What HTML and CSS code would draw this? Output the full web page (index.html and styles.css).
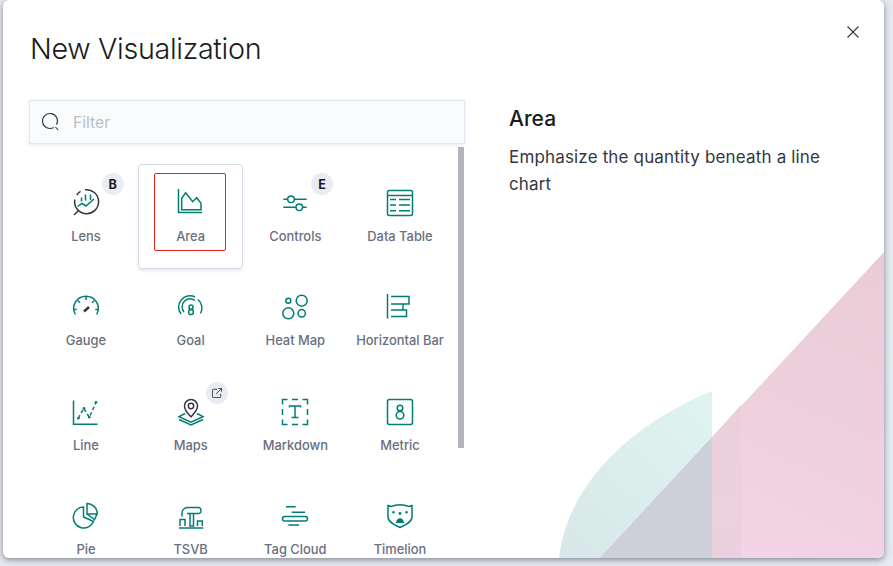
FILE: index.html
```html
<!DOCTYPE html>
<html lang="en">
<head>
  <meta charset="UTF-8">
  <title>New Visualization</title>
  <link rel="stylesheet" href="styles.css">
</head>
<body>

  <div class="modal">
    <svg class="modal-art" viewBox="0 0 881 558" aria-hidden="true">
      <defs>
        <linearGradient id="pink-fade" gradientUnits="userSpaceOnUse" x1="881" y1="252" x2="738" y2="558">
          <stop offset="0" stop-color="#e9ccd6"/>
          <stop offset="1" stop-color="#f3d4e3"/>
        </linearGradient>
        <linearGradient id="pink-band" gradientUnits="userSpaceOnUse" x1="738" y1="405" x2="709" y2="558">
          <stop offset="0" stop-color="#eccfdb"/>
          <stop offset="1" stop-color="#ebd1df"/>
        </linearGradient>
        <linearGradient id="teal-fade" gradientUnits="userSpaceOnUse" x1="709" y1="391" x2="556" y2="558">
          <stop offset="0" stop-color="#dff4f1"/>
          <stop offset="1" stop-color="#d8e7e7"/>
        </linearGradient>
      </defs>
      <path d="M556 558C564 488 622 427 709 391V558Z" fill="url(#teal-fade)"/>
      <path d="M881 252V558H597Z" fill="url(#pink-fade)"/>
      <path d="M597 558L709 437V558Z" fill="#cdcfd9"/>
      <path d="M709 558V437L738 405V558Z" fill="url(#pink-band)"/>
    </svg>

    <svg class="modal-close" viewBox="0 0 12 12" aria-hidden="true">
      <path d="M.5.5l11 11M11.5.5l-11 11"/>
    </svg>

    <div class="picker">
      <h1>New Visualization</h1>

      <div class="filter">
        <svg viewBox="0 0 20 20" aria-hidden="true">
          <path d="M12.750 15.500A7.500 7.500 0 1 1 15.500 12.750"/>
          <path d="M14.500 15l2.500 3"/>
        </svg>
        <span>Filter</span>
      </div>

      <div class="scroll-thumb"></div>

      <div class="types">
        <div class="type">
          <svg class="icon" viewBox="0 0 32 32">
            <path class="dark" d="M15 2.800A12 12 0 1 1 4.800 12.500M6.700 8A12 12 0 0 1 10.500 4.400M4 28l4-4"/>
            <path d="M11.500 10.500v4M15.500 7.500v6M20.500 7.500v5.500M7.500 19.500l4.500-3 4 2.500 8-7"/>
          </svg>
          <span class="label">Lens</span>
          <span class="badge">B</span>
        </div>
        <div class="type selected">
          <svg class="icon" viewBox="0 0 32 32">
            <path d="M3.500 2v23.500H27M6.700 22.800V11.300l4-5.600 7 9 4-4 4.300 5.600v6.500Z"/>
          </svg>
          <span class="label">Area</span>
        </div>
        <div class="type">
          <svg class="icon" viewBox="0 0 32 32">
            <path d="M4.300 12.300h4.400M15.300 12.300h12.400M4.300 20.300h12.700M23.600 20.300h4.100"/>
            <circle cx="12" cy="12.300" r="3.300"/>
            <circle cx="20.300" cy="20.300" r="3.300"/>
          </svg>
          <span class="label">Controls</span>
          <span class="badge">E</span>
        </div>
        <div class="type">
          <svg class="icon" viewBox="0 0 32 32">
            <rect x="3.500" y="3.500" width="25" height="25" rx="2"/>
            <path d="M3.500 8.500h25M6 12.500h6M15 12.500h11M6 18h6M15 18h11M6 23.700h6M15 23.700h11"/>
          </svg>
          <span class="label">Data Table</span>
        </div>

        <div class="type">
          <svg class="icon" viewBox="0 0 32 32">
            <path d="M5.300 23.500A12.300 12.300 0 1 1 26.700 23.500M16 6v3M8 9.800l2 2M24 9.800l-2 2M3.700 18.500h3M25.300 18.500h3"/>
            <path class="thick" d="M14 20.500l5-4.500"/>
          </svg>
          <span class="label">Gauge</span>
        </div>
        <div class="type">
          <svg class="icon" viewBox="0 0 32 32">
            <path d="M6 23A11.300 11.300 0 0 1 20 6M23 8.500A11.300 11.300 0 0 1 25.500 22.500"/>
            <path d="M9 21A8 8 0 0 1 20 9.500"/>
            <ellipse cx="16" cy="16.200" rx="2" ry="2.200"/>
            <ellipse cx="16" cy="21" rx="2.400" ry="2.600"/>
          </svg>
          <span class="label">Goal</span>
        </div>
        <div class="type">
          <svg class="icon" viewBox="0 0 32 32">
            <circle cx="9.300" cy="9.700" r="2.500"/>
            <circle cx="22.700" cy="9.700" r="5.500"/>
            <circle cx="9.300" cy="22.300" r="5.500"/>
            <circle cx="22.700" cy="22.300" r="3.700"/>
          </svg>
          <span class="label">Heat Map</span>
        </div>
        <div class="type">
          <svg class="icon" viewBox="0 0 32 32">
            <path d="M3.500 3v24.500M7 5.500h18v7.500H7M7 13h12v6H7M19 19h3.500v6.500H7"/>
          </svg>
          <span class="label">Horizontal Bar</span>
        </div>

        <div class="type">
          <svg class="icon" viewBox="0 0 32 32">
            <path d="M3.500 4.500v23.800h24"/>
            <path class="dots" d="M8.300 22.300l5.500-10 5.500 9 6.700-15"/>
            <circle class="dot" cx="26" cy="6.300" r="1.300"/>
            <circle class="dot" cx="19.300" cy="21.300" r="1.300"/>
            <circle class="dot" cx="8.300" cy="22.300" r="1.300"/>
            <circle class="dot" cx="14" cy="12.300" r="1.300"/>
          </svg>
          <span class="label">Line</span>
        </div>
        <div class="type">
          <svg class="icon" viewBox="0 0 32 32">
            <path class="dark" d="M16 20.800C13 17.500 9.500 14.500 9.500 10a6.500 6.500 0 0 1 13 0C22.500 14.500 19 17.500 16 20.800Z"/>
            <circle class="dark" cx="16" cy="10" r="2.700"/>
            <path d="M10 17.500l-6 3.200 12 5.500 12-5.500-6-3.200M4 23.500l12 5.500 12-5.500"/>
          </svg>
          <span class="label">Maps</span>
          <span class="badge">
            <svg class="badge-icon" viewBox="0 0 12 12">
              <path d="M6 1.500H1.500a1 1 0 0 0-1 1v8a1 1 0 0 0 1 1h8a1 1 0 0 0 1-1V7M5 7l6.500-6.500M7.500.5h4v4"/>
            </svg>
          </span>
        </div>
        <div class="type">
          <svg class="icon" viewBox="0 0 32 32">
            <path d="M8.500 3.500h-5v5M13 3.500h6M23.500 3.500h5v5M3.500 13v6M28.500 13v6M3.500 23.500v5h5M13 28.500h6M23.500 28.500h5v-5"/>
            <path d="M10.500 11.500V10h11v1.500M16 10v11.500M12.500 21.500h7"/>
          </svg>
          <span class="label">Markdown</span>
        </div>
        <div class="type">
          <svg class="icon" viewBox="0 0 32 32">
            <rect x="3.500" y="3.500" width="25" height="25" rx="2"/>
            <circle cx="16" cy="12" r="2.800"/>
            <circle cx="16" cy="19.300" r="3.800"/>
          </svg>
          <span class="label">Metric</span>
        </div>

        <div class="type">
          <svg class="icon" viewBox="0 0 32 32">
            <path d="M17 3.500A10.500 10.500 0 0 1 27.300 14H17Z"/>
            <path d="M13.500 7A10.500 10.500 0 1 0 23.500 21.500L13.500 17Z"/>
            <path d="M17 14l7.500 5.500 2.500-5.500"/>
          </svg>
          <span class="label">Pie</span>
        </div>
        <div class="type">
          <svg class="icon" viewBox="0 0 32 32">
            <path d="M4 28h24.300M5 26v-6.500h5V26M15 13.500V26h3.500V13.500M22.500 26v-5h4.800v5"/>
            <path d="M7 16.500v-3a6 6 0 0 1 5-6h11.500a2.500 2.500 0 0 1 2.500 2.500v1a2.500 2.500 0 0 1-2.500 2.500H12"/>
          </svg>
          <span class="label">TSVB</span>
        </div>
        <div class="type">
          <svg class="icon" viewBox="0 0 32 32">
            <path d="M7 6.700h9.700M12.700 12.300H26M9.300 25H20"/>
            <rect x="3.500" y="16.500" width="25" height="4.500" rx="2.250"/>
          </svg>
          <span class="label">Tag Cloud</span>
        </div>
        <div class="type">
          <svg class="icon" viewBox="0 0 32 32">
            <path d="M4 5.500l3 1c5.500-2 12.500-2 18 0l3-1V17c0 5.500-7 8-12 10.500C11 25 4 22.500 4 17Z"/>
            <circle class="dot" cx="9.500" cy="12.300" r="1.200"/>
            <circle class="dot" cx="22.500" cy="12.300" r="1.200"/>
            <circle class="dot" cx="16" cy="13.500" r="1.400"/>
            <path class="dot" d="M12 23c0-6.500 8-6.500 8 0Z"/>
          </svg>
          <span class="label">Timelion</span>
        </div>
      </div>
    </div>

    <div class="details">
      <h2>Area</h2>
      <p>Emphasize the quantity beneath a line chart</p>
    </div>
  </div>

</body>
</html>
```

FILE: styles.css
```css
body {
  font-family: Inter, "Noto Sans", sans-serif;
  margin: 0;
  padding: 0 9px 8px 3px;
  height: 100vh;
  box-sizing: border-box;
  background: #e9ebf0;
  overflow: hidden;
}

.modal {
  position: relative;
  display: flex;
  height: 100%;
  background: #ffffff;
  border-radius: 6px;
  box-shadow: 0 2px 5px rgba(60, 66, 90, 0.45), 0 1px 12px rgba(60, 66, 90, 0.2);
  overflow: hidden;
}

.modal-art {
  position: absolute;
  left: 0;
  top: 0;
  width: 100%;
  height: 100%;
}

.modal-close {
  position: absolute;
  right: 25px;
  top: 26px;
  width: 12px;
  height: 12px;
  fill: none;
  stroke: #343741;
  stroke-width: 1.1;
}

.picker {
  position: relative;
  width: 462px;
  flex: none;
}

h1 {
  margin: 0;
  padding: 30px 0 0 27px;
  height: 100px;
  box-sizing: border-box;
  font-size: 28.7px;
  line-height: 38px;
  font-weight: 300;
  letter-spacing: -0.32px;
  color: #1a1c21;
}

.filter {
  display: flex;
  align-items: center;
  gap: 12px;
  margin-left: 26px;
  height: 44px;
  box-sizing: border-box;
  padding-left: 11px;
  background: #fafbfd;
  border: 1px solid #e2e6f0;
  box-shadow: 0 1px 3px rgba(100, 110, 140, 0.12);
  color: #bbbfc8;
  font-size: 15.7px;
}

.filter svg {
  width: 20px;
  height: 20px;
  fill: none;
  stroke: #343741;
  stroke-width: 1.1;
}

.scroll-thumb {
  position: absolute;
  left: 455px;
  top: 147px;
  width: 6px;
  height: 301px;
  background: #b4b6bc;
}

.types {
  display: grid;
  grid-template-columns: repeat(4, 104.7px);
  grid-auto-rows: 104.5px;
  margin: 20px 0 0 30.6px;
}

.type {
  position: relative;
  display: flex;
  flex-direction: column;
  align-items: center;
  padding-top: 22.8px;
  box-sizing: border-box;
}

.type.selected {
  border: 1px solid #d3dae6;
  border-radius: 4px;
  padding-top: 22px;
  box-shadow: 0 2px 3px rgba(100, 110, 140, 0.15);
}

.type.selected::after {
  content: "";
  position: absolute;
  left: 15px;
  top: 8px;
  width: 70px;
  height: 76px;
  border: 1px solid #e8231c;
  border-radius: 2px;
}

.icon {
  width: 32px;
  height: 32px;
  fill: none;
  stroke: #017d73;
  stroke-width: 1.5;
}

.icon .dark {
  stroke: #343741;
}

.icon .thick {
  stroke-width: 2.5;
  stroke: #343741;
}

.icon .dots {
  stroke-dasharray: 3.5 2.5;
}

.icon .dot {
  fill: #017d73;
  stroke: none;
}

.label {
  margin-top: 10px;
  font-size: 12.9px;
  line-height: 16px;
  font-weight: 500;
  color: #6a7080;
  white-space: nowrap;
}

.badge {
  position: absolute;
  left: 68px;
  top: 9px;
  width: 22px;
  height: 22px;
  border-radius: 50%;
  background: #e9edf3;
  display: flex;
  align-items: center;
  justify-content: center;
  font-size: 12.6px;
  font-weight: 700;
  color: #1a1c21;
}

.badge-icon {
  width: 10px;
  height: 10px;
  fill: none;
  stroke: #343741;
  stroke-width: 1.1;
}

.details {
  position: relative;
  padding: 105px 48px 0 44px;
  flex: 1;
}

h2 {
  margin: 0 0 12px;
  font-size: 21px;
  line-height: 27px;
  font-weight: 500;
  color: #1a1c21;
}

p {
  margin: 0;
  font-size: 17px;
  line-height: 27px;
  letter-spacing: 0.16px;
  color: #343741;
}
```
